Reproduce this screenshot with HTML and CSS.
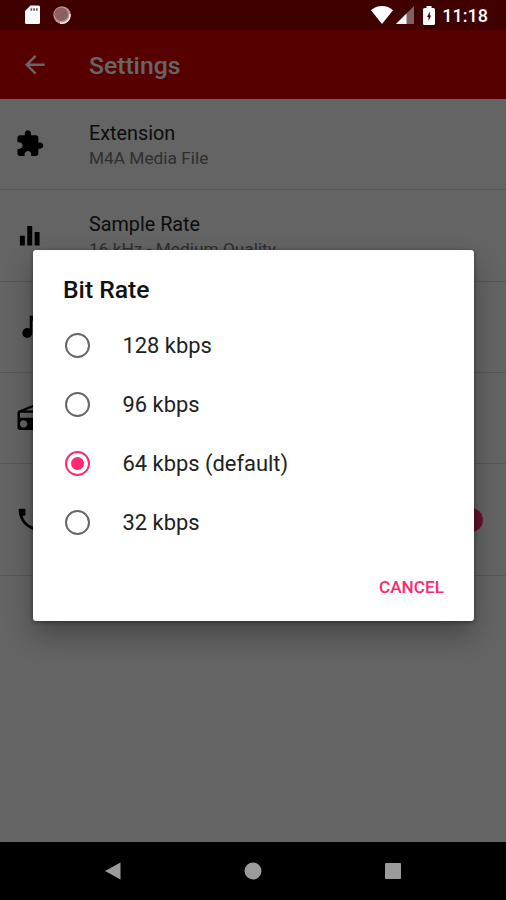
FILE: index.html
```html
<!DOCTYPE html>
<html lang="en">
<head>
    <meta charset="UTF-8">
    <meta name="viewport" content="width=device-width, initial-scale=1.0">
    <title>Settings</title>
    <link rel="stylesheet" href="styles.css">
</head>
<body>
    <div class="screen">
        <div class="status-bar">
            <div class="status-left">
                <svg class="sd-icon" width="17" height="20" viewBox="0 0 17 20">
                    <path fill="#fff" d="M6.500.5h8A1.500 1.500 0 0 1 16 2v15.500a1.500 1.500 0 0 1-1.500 1.500h-12a1.500 1.500 0 0 1-1.500-1.500V6z"/>
                    <path fill="#705050" d="M6.500 3.200h1.700v2.600H6.500zM9.200 3.200h1.700v2.600H9.200zM11.900 3.200h1.700v2.600h-1.700z"/>
                </svg>
                <svg class="sync-icon" width="18" height="18" viewBox="0 0 18 18">
                    <circle cx="9" cy="9" r="8.700" fill="#b99696"/>
                    <path d="M17 8a8.200 8.200 0 0 1-10 9" fill="none" stroke="#f5e8e8" stroke-width="1.500"/>
                    <circle cx="8.300" cy="8.200" r="6.800" fill="#8d6060"/>
                </svg>
            </div>
            <div class="status-right">
                <svg width="22" height="18" viewBox="0 0 22 18">
                    <path fill="#fff" d="M11 18 0 4.200C3 1.500 6.800 0 11 0s8 1.500 11 4.200z"/>
                </svg>
                <svg class="signal-icon" width="18" height="18" viewBox="0 0 18 18">
                    <path fill="#806060" d="M18 0v18H0z"/>
                    <path fill="#fff" d="M10.500 7.500V18H0z"/>
                </svg>
                <svg class="battery-icon" width="12" height="19" viewBox="0 0 12 19">
                    <path fill="#fff" d="M3.500 0h5v2h2A1.500 1.500 0 0 1 12 3.500v14a1.500 1.500 0 0 1-1.500 1.500h-9A1.500 1.500 0 0 1 0 17.500v-14A1.500 1.500 0 0 1 1.500 2h2z"/>
                    <path fill="#400000" d="M6.800 5.500 4 11h1.500v4L8.200 9.500H6.800z"/>
                </svg>
                <span class="clock">11:18</span>
            </div>
        </div>

        <div class="toolbar">
            <svg class="icon" viewBox="0 0 24 24" fill="#fff">
                <path d="M20 11H7.830l5.590-5.590L12 4l-8 8 8 8 1.410-1.410L7.830 13H20v-2z"/>
            </svg>
            <h1>Settings</h1>
        </div>

        <div class="list">
            <div class="row">
                <svg class="icon" viewBox="0 0 24 24">
                    <path d="M20.500 11H19V7c0-1.100-.9-2-2-2h-4V3.500C13 2.120 11.880 1 10.500 1S8 2.120 8 3.500V5H4c-1.100 0-1.990.9-1.990 2v3.800H3.500c1.490 0 2.700 1.210 2.700 2.700s-1.210 2.700-2.700 2.700H2V20c0 1.100.9 2 2 2h3.800v-1.500c0-1.490 1.210-2.700 2.700-2.700 1.490 0 2.700 1.210 2.700 2.700V22H17c1.100 0 2-.9 2-2v-4h1.500c1.380 0 2.500-1.120 2.500-2.500S21.880 11 20.500 11z"/>
                </svg>
                <div class="row-text">
                    <div class="row-title">Extension</div>
                    <div class="row-sub">M4A Media File</div>
                </div>
            </div>
            <div class="row">
                <svg class="icon" viewBox="0 0 24 24">
                    <path d="M10 20h4V4h-4v16zm-6 0h4v-8H4v8zM16 9v11h4V9h-4z"/>
                </svg>
                <div class="row-text">
                    <div class="row-title">Sample Rate</div>
                    <div class="row-sub">16 kHz - Medium Quality</div>
                </div>
            </div>
            <div class="row">
                <svg class="icon" viewBox="0 0 24 24">
                    <path d="M12 3v10.550c-.59-.34-1.270-.55-2-.55-2.210 0-4 1.790-4 4s1.790 4 4 4 4-1.790 4-4V7h4V3h-6z"/>
                </svg>
            </div>
            <div class="row">
                <svg class="icon" viewBox="0 0 24 24">
                    <path d="M3.240 6.150C2.510 6.430 2 7.170 2 8v12c0 1.100.89 2 2 2h16c1.110 0 2-.9 2-2V8c0-1.110-.89-2-2-2H8.300l8.260-3.340L15.880 1 3.240 6.150zM7 20c-1.660 0-3-1.340-3-3s1.340-3 3-3 3 1.340 3 3-1.340 3-3 3zm13-8h-2v-2h-2v2H4V8h16v4z"/>
                </svg>
            </div>
            <div class="row row-tall">
                <svg class="icon" viewBox="0 0 24 24">
                    <path d="M3.800 3H7.700q.8 0 .8.800V8q0 .8-.8.800H6.200C7 12.500 10.200 16.200 15.200 17.800V16.300q0-.8.800-.8h4.200q.8 0 .8.800v3.900q0 .8-.8.800C10.700 21 3 13.300 3 3.800Q3 3 3.800 3z"/>
                </svg>
                <div class="switch"></div>
            </div>
        </div>

        <div class="nav-bar">
            <svg width="16" height="18" viewBox="0 0 16 18"><path fill="#9b9b9b" d="M15.500.5v17L0 9z"/></svg>
            <svg width="18" height="18" viewBox="0 0 18 18"><circle cx="9" cy="9" r="8.500" fill="#9b9b9b"/></svg>
            <svg width="16" height="16" viewBox="0 0 16 16"><rect width="16" height="16" rx="1" fill="#9b9b9b"/></svg>
        </div>

        <div class="overlay">
            <div class="dialog">
                <h2>Bit Rate</h2>
                <div class="options">
                    <div class="option"><span class="radio"></span>128 kbps</div>
                    <div class="option"><span class="radio"></span>96 kbps</div>
                    <div class="option"><span class="radio checked"></span>64 kbps (default)</div>
                    <div class="option"><span class="radio"></span>32 kbps</div>
                </div>
                <div class="actions">
                    <button class="cancel">CANCEL</button>
                </div>
            </div>
        </div>
    </div>
</body>
</html>
```
FILE: styles.css
```css
* {
    box-sizing: border-box;
}

body {
    margin: 0;
    font-family: Roboto, "Liberation Sans", sans-serif;
    background-color: #000;
}

h1, h2 {
    margin: 0;
    font-weight: 500;
}

svg {
    display: block;
    flex-shrink: 0;
}

.screen {
    position: relative;
    width: 506px;
    height: 900px;
    display: flex;
    flex-direction: column;
    overflow: hidden;
    background-color: #fafafa;
}

/* Status bar, background is already dimmed */
.status-bar {
    position: relative;
    z-index: 2;
    height: 30px;
    padding: 0 18px 0 24px;
    display: flex;
    justify-content: space-between;
    align-items: center;
    background-color: #400000;
    color: #fff;
}

.status-left, .status-right {
    display: flex;
    align-items: center;
}

.sync-icon {
    margin-left: 12px;
}

.signal-icon {
    margin-left: 3px;
}

.battery-icon {
    margin-left: 9px;
}

.clock {
    margin-left: 7px;
    font-size: 18px;
    font-weight: 500;
    line-height: 30px;
    padding-top: 2px;
}

.toolbar {
    height: 69px;
    padding: 0 20px;
    display: flex;
    align-items: center;
    background-color: #d70000;
    color: #fff;
}

.toolbar h1 {
    margin-left: 39.5px;
    padding-top: 1px;
    font-size: 24.7px;
}

.icon {
    width: 29.5px;
    height: 29.5px;
}

.list {
    flex: 1;
}

.row {
    height: 91.3px;
    padding-left: 15px;
    display: flex;
    align-items: center;
    border-bottom: 1px solid #dadada;
}

.row-tall {
    height: 111.5px;
}

.row-text {
    margin-left: 44.5px;
    padding-top: 4px;
}

.row-title {
    font-size: 19.8px;
    line-height: 25px;
    color: #212121;
}

.row-sub {
    font-size: 17.3px;
    line-height: 25px;
    color: #757575;
}

.switch {
    width: 24px;
    height: 24px;
    margin-left: auto;
    margin-top: 2px;
    margin-right: 23px;
    border-radius: 50%;
    background-color: #ff2870;
}

.nav-bar {
    position: relative;
    z-index: 2;
    height: 58px;
    padding: 0 105px;
    display: flex;
    justify-content: space-between;
    align-items: center;
    background-color: #000;
}

/* Dialog */
.overlay {
    position: absolute;
    inset: 0;
    z-index: 1;
    padding: 250px 32px 0 33px;
    background-color: rgba(0, 0, 0, 0.6);
}

.dialog {
    height: 371px;
    padding: 25px 22px 14px 30px;
    display: flex;
    flex-direction: column;
    background-color: #fff;
    border-radius: 3px;
    box-shadow: 0 14px 28px rgba(0, 0, 0, 0.3), 0 1px 4px rgba(0, 0, 0, 0.4);
}

.dialog h2 {
    font-size: 24.7px;
    line-height: 30px;
    color: #111;
}

.options {
    margin-top: 11px;
}

.option {
    height: 59px;
    padding-left: 2px;
    display: flex;
    align-items: center;
    font-size: 21.9px;
    color: #212121;
}

.radio {
    width: 25px;
    height: 25px;
    margin-right: 32.5px;
    border: 2px solid #666;
    border-radius: 50%;
}

.radio.checked {
    padding: 4px;
    border-color: #ff2870;
    background-color: #ff2870;
    background-clip: content-box;
}

.actions {
    margin-top: auto;
    display: flex;
    justify-content: flex-end;
}

.cancel {
    padding: 10px 8px;
    border: none;
    background: none;
    font-family: inherit;
    font-size: 17.2px;
    font-weight: 500;
    line-height: 20px;
    color: #ff2870;
}
```
